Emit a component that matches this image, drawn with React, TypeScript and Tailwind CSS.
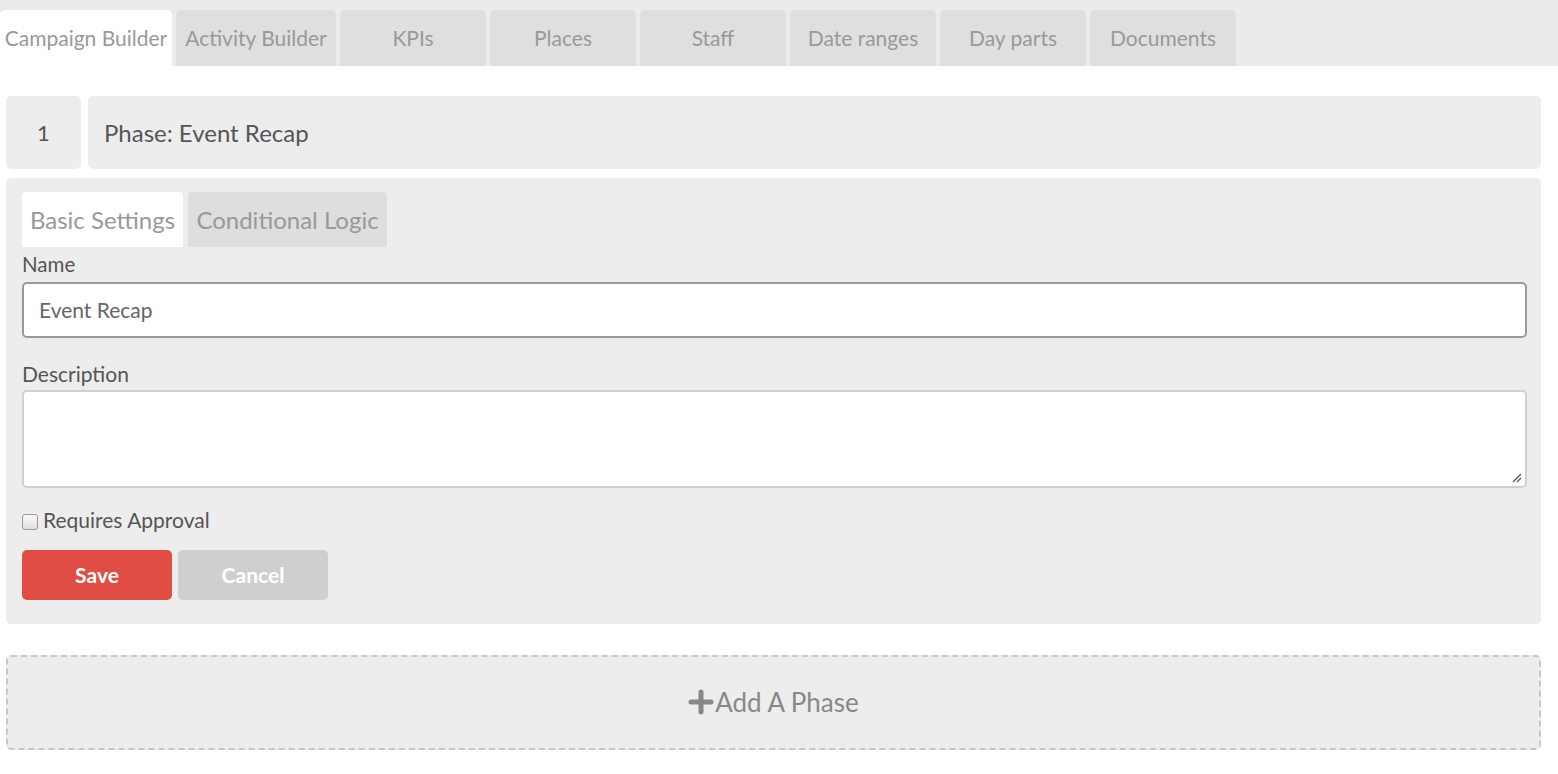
import React from "react";

const tabs = [
  { label: "Campaign Builder", w: "w-[172px]", active: true },
  { label: "Activity Builder", w: "w-[160px]" },
  { label: "KPIs", w: "w-[146px]" },
  { label: "Places", w: "w-[146px]" },
  { label: "Staff", w: "w-[146px]" },
  { label: "Date ranges", w: "w-[146px]" },
  { label: "Day parts", w: "w-[146px]" },
  { label: "Documents", w: "w-[146px]" },
];

export default function App() {
  return (
    <div className="min-h-[774px] w-[1558px] bg-white font-['Lato','Liberation_Sans',sans-serif]">
      <div className="flex h-[66px] items-end gap-[4px] bg-[#ebebeb] pr-2">
        {tabs.map((t) => (
          <div
            key={t.label}
            className={`flex h-[56px] ${t.w} items-center justify-center whitespace-nowrap rounded-t-[5px] text-[21px] text-[#999] ${
              t.active ? "bg-white" : "bg-[#dfdfdf]"
            }`}
          >
            {t.label}
          </div>
        ))}
      </div>

      <div className="px-[6px] pr-[17px] pt-[30px]">
        <div className="flex h-[73px] gap-[7px]">
          <div className="flex w-[75px] items-center justify-center rounded-[5px] bg-[#ededed] text-[22px] text-[#555]">
            1
          </div>
          <div className="flex flex-1 items-center rounded-[5px] bg-[#ededed] pl-[16px] text-[24px] text-[#555]">
            Phase: Event Recap
          </div>
        </div>

        <div className="mt-[9px] rounded-[5px] bg-[#ededed] pb-[24px] pl-[16px] pr-[14px] pt-[14px]">
          <div className="flex gap-[5px]">
            <div className="flex h-[55px] w-[161px] items-center justify-center rounded-t-[4px] bg-white text-[24px] text-[#999]">
              Basic Settings
            </div>
            <div className="flex h-[55px] w-[199px] items-center justify-center rounded-t-[4px] bg-[#dedede] text-[24px] text-[#999]">
              Conditional Logic
            </div>
          </div>

          <div className="mt-[5px] text-[20.5px] leading-[24px] text-[#555]">Name</div>
          <div className="mt-[6px] flex h-[56px] items-center rounded-[5px] border-2 border-[#999] bg-white pl-[15px] text-[21px] text-[#666]">
            Event Recap
          </div>

          <div className="mt-[24px] text-[21px] leading-[24px] text-[#555]">Description</div>
          <div className="relative mt-[4px] h-[98px] rounded-[5px] border-2 border-[#d0d0d0] bg-white">
            <svg className="absolute bottom-[3px] right-[3px]" width="12" height="12" viewBox="0 0 12 12">
              <path d="M11 3 L3 11 M11 7 L7 11" stroke="#555" strokeWidth="1.3" />
            </svg>
          </div>

          <div className="mt-[20px] flex h-[24px] items-center gap-[5px]">
            <div className="mt-[4px] h-[16px] w-[16px] rounded-[3px] border border-[#999] bg-gradient-to-b from-[#fafafa] to-[#e0e0e0]" />
            <span className="text-[21px] leading-[24px] text-[#555]">Requires Approval</span>
          </div>

          <div className="mt-[18px] flex gap-[6px]">
            <button className="h-[50px] w-[150px] rounded-[5px] bg-[#df4d45] text-[21px] font-bold text-white">
              Save
            </button>
            <button className="h-[50px] w-[150px] rounded-[5px] bg-[#cfcfcf] text-[21px] font-bold text-white">
              Cancel
            </button>
          </div>
        </div>

        <div className="mt-[31px] flex h-[95px] items-center justify-center rounded-[5px] border-2 border-dashed border-[#c8c8c8] bg-[#ededed] text-[26px] text-[#888]">
          <svg width="26" height="26" viewBox="0 0 26 26" className="mr-[1px] mb-[2px]">
            <path d="M13 3 V23 M3 13 H23" stroke="#888" strokeWidth="5" strokeLinecap="round" />
          </svg>
          Add A Phase
        </div>
      </div>
    </div>
  );
}
